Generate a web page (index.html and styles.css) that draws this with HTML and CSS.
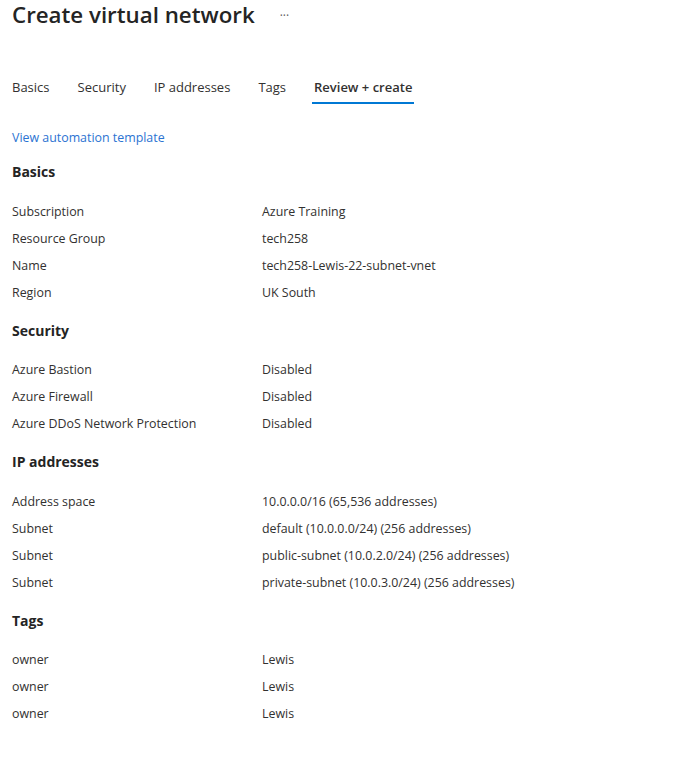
FILE: index.html
```html
<!DOCTYPE html>
<html lang="en">
<head>
<meta charset="utf-8">
<title>Create virtual network</title>
<link rel="stylesheet" href="styles.css">
</head>
<body>
<div class="page">
  <div class="title-row">
    <h1 class="title">Create virtual network</h1>
    <span class="more">···</span>
  </div>
  <nav class="tabs">
    <span class="tab">Basics</span>
    <span class="tab">Security</span>
    <span class="tab">IP addresses</span>
    <span class="tab">Tags</span>
    <span class="tab active">Review + create</span>
  </nav>
  <a class="link" href="#">View automation template</a>

  <section class="section">
    <h2 class="section-title">Basics</h2>
    <div class="rows">
      <div class="row"><span class="label">Subscription</span><span class="value">Azure Training</span></div>
      <div class="row"><span class="label">Resource Group</span><span class="value">tech258</span></div>
      <div class="row"><span class="label">Name</span><span class="value">tech258-Lewis-22-subnet-vnet</span></div>
      <div class="row"><span class="label">Region</span><span class="value">UK South</span></div>
    </div>
  </section>

  <section class="section">
    <h2 class="section-title">Security</h2>
    <div class="rows">
      <div class="row"><span class="label">Azure Bastion</span><span class="value">Disabled</span></div>
      <div class="row"><span class="label">Azure Firewall</span><span class="value">Disabled</span></div>
      <div class="row"><span class="label">Azure DDoS Network Protection</span><span class="value">Disabled</span></div>
    </div>
  </section>

  <section class="section">
    <h2 class="section-title">IP addresses</h2>
    <div class="rows">
      <div class="row"><span class="label">Address space</span><span class="value">10.0.0.0/16 (65,536 addresses)</span></div>
      <div class="row"><span class="label">Subnet</span><span class="value">default (10.0.0.0/24) (256 addresses)</span></div>
      <div class="row"><span class="label">Subnet</span><span class="value">public-subnet (10.0.2.0/24) (256 addresses)</span></div>
      <div class="row"><span class="label">Subnet</span><span class="value">private-subnet (10.0.3.0/24) (256 addresses)</span></div>
    </div>
  </section>

  <section class="section">
    <h2 class="section-title">Tags</h2>
    <div class="rows">
      <div class="row"><span class="label">owner</span><span class="value">Lewis</span></div>
      <div class="row"><span class="label">owner</span><span class="value">Lewis</span></div>
      <div class="row"><span class="label">owner</span><span class="value">Lewis</span></div>
    </div>
  </section>
</div>
</body>
</html>
```

FILE: styles.css
```css
html, body {
  margin: 0;
  padding: 0;
  background: #ffffff;
}

body {
  font-family: "Open Sans", "Noto Sans", "Liberation Sans", sans-serif;
  color: #323130;
  font-size: 12.4px;
}

.page {
  padding: 0 12px;
}

.title-row {
  display: flex;
  align-items: center;
  height: 30px;
}

.title {
  margin: 0;
  font-size: 22.3px;
  font-weight: 600;
  line-height: 30px;
  color: #242424;
}

.more {
  margin-left: 25px;
  font-size: 12px;
  color: #605e5c;
}

.tabs {
  display: flex;
  gap: 28px;
  margin-top: 47px;
}

.tab {
  font-size: 13px;
  line-height: 20px;
  padding-bottom: 5px;
  border-bottom: 2px solid transparent;
  color: #323130;
}

.tab.active {
  font-weight: 600;
  border-bottom-color: #0078d4;
  margin-left: -2px;
  padding: 0 2px 5px;
}

.link {
  display: block;
  margin-top: 24px;
  line-height: 20px;
  color: #2b73d2;
  text-decoration: none;
}

.section {
  margin-top: 14px;
}

.section + .section {
  margin-top: 15px;
}

.section-title {
  margin: 0;
  font-size: 14px;
  font-weight: 700;
  line-height: 20px;
  color: #242424;
}

.rows {
  margin-top: 15.5px;
}

.row {
  display: grid;
  grid-template-columns: 250px 1fr;
  height: 27px;
  line-height: 27px;
}
```
